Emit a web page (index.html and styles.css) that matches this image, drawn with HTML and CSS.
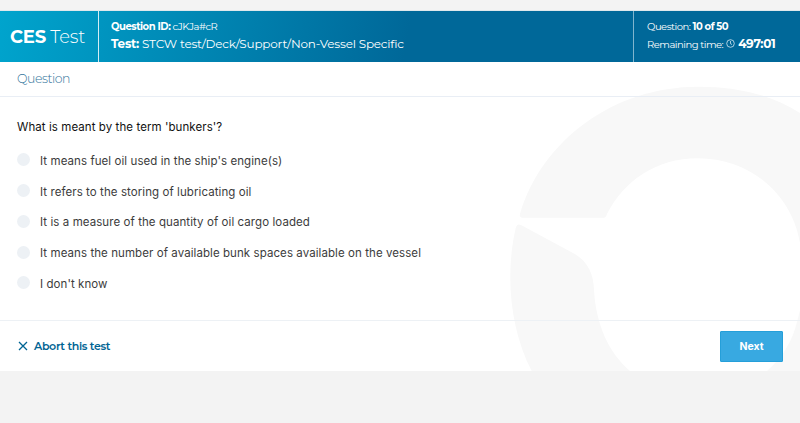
FILE: index.html
```html
<!DOCTYPE html>
<html lang="en">
<head>
<meta charset="utf-8">
<title>CES Test</title>
<link rel="stylesheet" href="styles.css">
</head>
<body>
<header class="header">
  <div class="brand"><span><b>CES</b> Test</span></div>
  <div class="details">
    <div class="question-id"><b>Question ID:</b> <span class="id-value">cJKJa#cR</span></div>
    <div class="test-name"><b>Test:</b> <span class="test-value">STCW test/Deck/Support/Non-Vessel Specific</span></div>
  </div>
  <div class="status">
    <div class="progress">Question: <b>10 of 50</b></div>
    <div class="remaining"><span>Remaining time:</span>
      <svg class="clock" viewBox="0 0 9 9"><circle cx="4.5" cy="4.5" r="3.8"/><path d="M4.500 2v2.700l1.500.8"/></svg>
      <b>497:01</b></div>
  </div>
</header>
<main class="card">
  <svg class="watermark" viewBox="0 0 300 309">
    <path d="M22 155.700Q19 155.700 20 152C42 78 114 24.700 198 24.700C238 24.700 272 33 300 51V181C292 132 250 96.300 198 96.300C156 96.300 124 119 107 152Q106 155.700 104 155.700Z"/>
    <path d="M15.700 166Q17 161 21 163L73 191C88 199 93.500 212 94 228C96 263 109 291 130 309H31.700C10 267 5 213 15.700 166Z"/>
    <path d="M300 248V309H267Q290 289 297 260Z"/>
  </svg>
  <h1 class="title">Question</h1>
  <section class="question">
    <p class="prompt">What is meant by the term 'bunkers'?</p>
    <ul class="answers">
      <li><i class="radio"></i><span>It means fuel oil used in the ship's engine(s)</span></li>
      <li><i class="radio"></i><span>It refers to the storing of lubricating oil</span></li>
      <li><i class="radio"></i><span>It is a measure of the quantity of oil cargo loaded</span></li>
      <li><i class="radio"></i><span>It means the number of available bunk spaces available on the vessel</span></li>
      <li><i class="radio"></i><span>I don't know</span></li>
    </ul>
  </section>
  <footer class="actions">
    <a class="abort"><svg class="cross" viewBox="0 0 10 10"><path d="M1 1l8 8M9 1L1 9"/></svg><span>Abort this test</span></a>
    <button class="next">Next</button>
  </footer>
</main>
</body>
</html>
```
FILE: styles.css
```css
* { box-sizing: border-box; }
body { margin: 0; padding-top: 11px; background: #f3f3f3; font-family: Inter, sans-serif; }
b { font-weight: 700; }
.header { display: flex; height: 51px; color: #fff; background: linear-gradient(100deg, #00a4cd 0%, #006899 51%); box-shadow: 0 -1px #dfe8ec; font-family: Montserrat, Inter, sans-serif; white-space: nowrap; }
.brand { width: 99px; padding: 1px 0 0 10px; border-right: 1px solid #d3edf5; font-size: 18px; font-weight: 300; line-height: 51px; letter-spacing: -.22px; }
.details { flex: 1; padding: 7px 0 0 12px; }
.question-id { font-size: 10px; line-height: 17px; letter-spacing: -.45px; }
.test-name { font-size: 12px; line-height: 18px; letter-spacing: -.2px; }
.id-value, .test-value { font-weight: 400; }
.status { width: 167px; padding: 7px 0 0 13px; border-left: 1px solid #80b5ce; font-size: 10px; font-weight: 400; letter-spacing: -.5px; }
.progress { line-height: 17px; }
.remaining { display: flex; align-items: center; height: 18px; }
.clock { width: 9px; height: 9px; margin: 0 3px 2px; fill: none; stroke: #d5e8f1; stroke-width: .8; }
.remaining b { margin-bottom: 2px; font-size: 12px; letter-spacing: -.3px; }
.card { position: relative; height: 309px; background: #fff; overflow: hidden; }
.watermark { position: absolute; right: 0; top: 0; width: 300px; height: 309px; fill: #f8f8f8; }
.title, .question, .actions { position: relative; }
.title { height: 35px; margin: 0; padding-left: 17px; border-bottom: 1px solid #e9eef5; color: #34759c; font: 300 12.500px/33px Montserrat, Inter, sans-serif; letter-spacing: -.45px; }
.question { height: 223px; padding: 20px 17px; color: #111; font-size: 11.500px; letter-spacing: .075px; }
.prompt { margin: 0; line-height: 20px; }
.answers { display: grid; grid-auto-rows: 30.750px; margin: 8.400px 0 0; padding: 0; list-style: none; color: #3c3c3c; }
.answers li { display: flex; align-items: center; }
.radio { width: 13px; height: 13px; margin: 0 10px 2px 0; border-radius: 50%; background: #edf1f5; }
.actions { display: flex; align-items: center; justify-content: space-between; height: 51px; padding: 1px 17px 0; border-top: 1px solid #edf1f5; }
.abort { display: flex; align-items: center; padding-bottom: 2px; color: #006493; font: 600 11px Montserrat, Inter, sans-serif; letter-spacing: -.33px; }
.cross { width: 10px; height: 10px; margin: 0 6px 0 1px; fill: none; stroke: currentColor; stroke-width: 1.3; }
.next { width: 63px; height: 31px; padding: 0; border: 1px solid #259fd9; border-radius: 1px; background: #38a9e1; color: #fff; font: 700 10.500px Inter, sans-serif; }
```
